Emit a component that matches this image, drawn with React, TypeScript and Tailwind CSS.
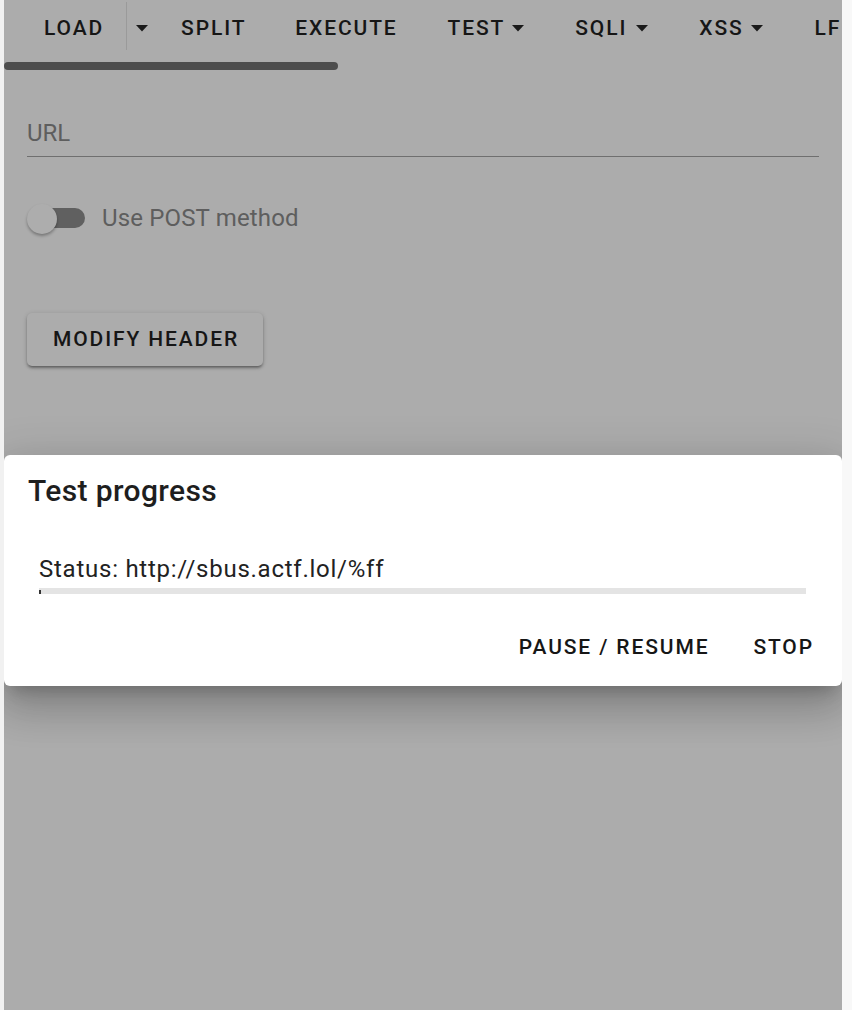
import React from "react";

const Arrow = () => (
  <svg width="12" height="7" viewBox="0 0 12 7" className="shrink-0">
    <path d="M0 0h12L6 6.5z" fill="#1a1a1a" />
  </svg>
);

const btn =
  "font-['Roboto',sans-serif] font-medium uppercase text-[21px] tracking-[1.875px] text-[#161616] leading-none";

export default function App() {
  return (
    <div className="flex w-[852px] h-[1010px] bg-[#f1f1f1] font-['Roboto',sans-serif] overflow-hidden">
      <div className="w-[4px] shrink-0" />
      <div className="relative w-[838px] shrink-0 h-full bg-[#acacac] flex flex-col overflow-hidden">
        {/* toolbar */}
        <div className="h-[54px] flex items-center whitespace-nowrap">
          <div className="flex items-center h-full">
            <div className={`${btn} pl-[40px] pr-[22px] pt-[3px]`}>Load</div>
            <div className="w-px h-[48px] bg-[#9a9a9a] self-start mt-[2px]" />
            <div className="pl-[9px] pr-[33px] pt-[2px] flex items-center">
              <Arrow />
            </div>
            <div className={`${btn} pr-[49px] pt-[3px]`}>Split</div>
            <div className={`${btn} pr-[50px] pt-[3px]`}>Execute</div>
            <div className={`${btn} flex items-center gap-[7px] pr-[51px] pt-[3px]`}>
              Test <Arrow />
            </div>
            <div className={`${btn} flex items-center gap-[9px] pr-[51px] pt-[3px]`}>
              SQLI <Arrow />
            </div>
            <div className={`${btn} flex items-center gap-[7px] pr-[52px] pt-[3px]`}>
              XSS <Arrow />
            </div>
            <div className={`${btn} pt-[3px]`}>LFI</div>
          </div>
        </div>
        {/* scrollbar */}
        <div className="h-[8px] mt-[8px] w-[334px] rounded-full bg-[#4d4d4d]" />

        {/* form */}
        <div className="px-[23px] pt-[51px]">
          <div className="border-b border-[#6f6f6f] h-[36px] flex items-start">
            <span className="text-[24px] leading-none text-[#5e5e5e]">URL</span>
          </div>
          <div className="mt-[46px] flex items-center h-[30px]">
            <div className="relative w-[58px] h-[30px] flex items-center">
              <div className="ml-[6px] w-[52px] h-[20px] rounded-full bg-[#606060]" />
              <div className="absolute left-0 top-[1px] w-[30px] h-[30px] rounded-full bg-[#adadad] shadow-[0_2px_3px_rgba(0,0,0,0.3)]" />
            </div>
            <span className="ml-[17px] text-[24px] leading-none tracking-[0.15px] text-[#5e5e5e]">Use POST method</span>
          </div>
          <div className="mt-[80px]">
            <div className="w-[236px] h-[53px] rounded-[5px] bg-[#acacac] shadow-[0_3px_3px_-2px_rgba(0,0,0,0.3),0_2px_3px_0_rgba(0,0,0,0.2),0_1px_5px_0_rgba(0,0,0,0.15)] flex items-center justify-center">
              <span className={`${btn} pl-[2px]`}>Modify header</span>
            </div>
          </div>
        </div>

        {/* dialog */}
        <div className="absolute left-0 right-0 top-[455px] h-[231px] bg-white rounded-[6px] shadow-[0_11px_15px_-7px_rgba(0,0,0,0.2),0_24px_38px_3px_rgba(0,0,0,0.14),0_9px_46px_8px_rgba(0,0,0,0.12)] flex flex-col">
          <div className="px-[24px] pt-[21px] text-[30px] font-medium leading-none tracking-[0.375px] text-[#1e1e1e]">
            Test progress
          </div>
          <div className="px-[35px] mt-[51px]">
            <div className="text-[24px] leading-none tracking-[0.75px] text-[#222]">
              Status: http://sbus.actf.lol/%ff
            </div>
            <div className="mt-[7px] h-[6px] w-[767px] bg-[#e4e4e4] relative">
              <div className="absolute left-0 bottom-0 w-[2px] h-[4px] bg-[#333]" />
            </div>
          </div>
          <div className="flex justify-end items-center mt-[43px] pr-[28px] gap-[44px]">
            <span className={`${btn} text-[#222]`}>Pause / Resume</span>
            <span className={`${btn} text-[#222]`}>Stop</span>
          </div>
        </div>
      </div>
      <div className="flex-1 bg-[#f8f8f8]" />
    </div>
  );
}
